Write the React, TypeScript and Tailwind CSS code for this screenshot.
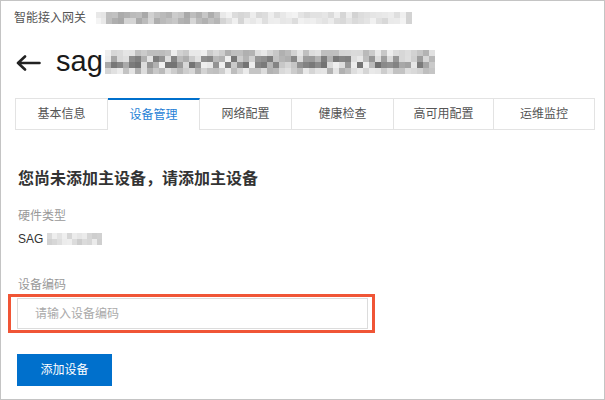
import type { ReactNode } from 'react'

const tabs = [
  { label: '基本信息', width: 'w-[93px]' },
  { label: '设备管理', width: 'w-[92px]', active: true },
  { label: '网络配置', width: 'w-[92px]' },
  { label: '健康检查', width: 'w-[102px]' },
  { label: '高可用配置', width: 'w-[100px]' },
  { label: '运维监控', width: 'w-[101px]' },
]

function seeded(seed: number) {
  let s = seed
  return () => {
    s = (s * 9301 + 49297) % 233280
    return s / 233280
  }
}

interface MosaicProps {
  cols: number
  rows: number
  cell: string
  min: number
  max: number
  seed: number
  fade?: boolean
}

// pixelated stand-in for the redacted text
function Mosaic({ cols, rows, cell, min, max, seed, fade }: MosaicProps) {
  const next = seeded(seed)
  return (
    <div className="flex flex-col">
      {Array.from({ length: rows }).map((_, r) => {
        const edge = fade && (r === 0 || r === rows - 1)
        return (
          <div key={r} className="flex">
            {Array.from({ length: cols }).map((_, c) => {
              const lo = edge ? min + (255 - min) * 0.45 : min
              const g = Math.round(lo + next() * (max - lo))
              return <div key={c} className={cell} style={{ backgroundColor: `rgb(${g},${g},${g})` }} />
            })}
          </div>
        )
      })}
    </div>
  )
}

function Label({ children }: { children: ReactNode }) {
  return <div className="text-[12px] leading-4 text-[#999]">{children}</div>
}

export default function App() {
  return (
    <div
      className="h-[400px] w-[605px] overflow-hidden border border-[#c4c4c4] bg-white"
      style={{ fontFamily: '"Liberation Sans", "Noto Sans CJK SC", sans-serif' }}
    >
      <div className="flex items-center pl-[13px] pt-[9px] text-[12px] leading-4 text-[#555]">
        <span>智能接入网关</span>
        <div className="ml-[10px] flex items-center">
          <Mosaic cols={2} rows={2} cell="h-[6px] w-[5px]" min={225} max={245} seed={3} />
          <Mosaic cols={19} rows={2} cell="h-[6px] w-[6px]" min={165} max={215} seed={7} />
          <Mosaic cols={32} rows={2} cell="h-[6px] w-[6px]" min={210} max={245} seed={11} />
        </div>
      </div>

      <div className="mt-[17px] flex h-[40px] items-center pl-[15px]">
        <svg width="25" height="16" viewBox="0 0 25 16" fill="none" stroke="#222" strokeWidth="2.6" strokeLinecap="round" strokeLinejoin="round">
          <path d="M23.5 8H2M9 1.5L2 8l7 6.5" />
        </svg>
        <span className="ml-[15px] -mt-[4px] text-[29px] leading-none text-[#1a1a1a]">sag</span>
        <div className="ml-[2px] -mt-[2px]">
          <Mosaic cols={55} rows={4} cell="h-[6px] w-[6px]" min={110} max={240} seed={19} fade />
        </div>
      </div>

      <div className="mt-[15px] flex pl-[14px]">
        {tabs.map((tab, i) => (
          <div
            key={tab.label}
            className={
              tab.active
                ? `${tab.width} flex h-[32px] items-center justify-center border-r border-t-2 border-[#e3e3e3] border-t-[#0070cc] text-[12px] text-[#1f7fd6]`
                : `${tab.width} flex h-[32px] items-center justify-center border-y border-r border-[#e3e3e3] text-[12px] text-[#555] ${i === 0 ? 'border-l' : ''}`
            }
          >
            {tab.label}
          </div>
        ))}
      </div>

      <div className="pl-[16px]">
        <div className="mt-[37px] pl-[1px] text-[16px] font-semibold leading-6 text-[#333]">您尚未添加主设备，请添加主设备</div>

        <div className="mt-[17px] pl-[1px]">
          <Label>硬件类型</Label>
        </div>
        <div className="mt-[7px] flex items-center pl-[1px] text-[12px] leading-4 text-[#333]">
          <span>SAG</span>
          <div className="ml-[4px]">
            <Mosaic cols={11} rows={2} cell="h-[6px] w-[5px]" min={205} max={240} seed={29} />
          </div>
        </div>

        <div className="mt-[30px] pl-[1px]">
          <Label>设备编码</Label>
        </div>
        <div className="ml-[-9px] mt-[1px] w-[367px] border-[3px] border-[#f05536] py-[1px] pl-[6px] pr-[4px]">
          <input
            className="h-[31px] w-full border border-[#dcdcdc] pl-[17px] text-[12px] text-[#333] outline-none placeholder:text-[#aaa]"
            placeholder="请输入设备编码"
          />
        </div>

        <button className="mt-[21px] flex h-[32px] w-[95px] items-center justify-center bg-[#0070cc] text-[12px] text-white">
          添加设备
        </button>
      </div>
    </div>
  )
}
